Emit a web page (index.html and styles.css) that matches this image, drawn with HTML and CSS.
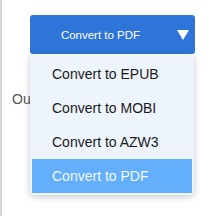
FILE: index.html
```html
<!DOCTYPE html>
<html>
<head>
<meta charset="utf-8">
<title>Convert</title>
<link rel="stylesheet" href="styles.css">
</head>
<body>
<div class="panel">
    <div class="convert">
        <button class="convert-btn">
            <span class="label">Convert to PDF</span>
            <span class="caret"></span>
        </button>
        <ul class="menu">
            <li>Convert to EPUB</li>
            <li>Convert to MOBI</li>
            <li>Convert to AZW3</li>
            <li class="active">Convert to PDF</li>
        </ul>
    </div>
    <p class="output">Output folder</p>
</div>
</body>
</html>
```

FILE: styles.css
```css
body, html {
    margin: 0;
    padding: 0;
    height: 100%;
    overflow: hidden;
    background: white;
}
.panel {
    height: 100%;
    border-left: 2px solid #d6d6d6;
    box-sizing: border-box;
    font-family: "Liberation Sans", Arial, sans-serif;
    padding-top: 15px;
}
.convert {
    position: relative;
    margin-left: 28px;
    width: 165px;
}
.convert-btn {
    display: flex;
    align-items: center;
    width: 165px;
    height: 39px;
    padding: 0 6px 0 0;
    border: none;
    border-radius: 3px;
    background-color: #2f74d8;
    color: white;
    font-family: inherit;
    font-size: 11.5px;
    cursor: pointer;
}
.convert-btn .label {
    flex: 1;
    text-align: center;
    padding-right: 6px;
}
.caret {
    width: 0;
    height: 0;
    border-left: 6px solid transparent;
    border-right: 6px solid transparent;
    border-top: 10px solid white;
}
.menu {
    position: absolute;
    top: 39px;
    left: 0;
    width: 160px;
    margin: 0;
    padding: 3px 2px 2px;
    list-style: none;
    background-color: #eef4fb;
    border-radius: 0 0 4px 4px;
    box-shadow: 0 2px 7px rgba(0, 0, 0, 0.22);
}
.menu li {
    height: 34px;
    line-height: 34px;
    padding-left: 20px;
    font-size: 14px;
    color: #1a1a1a;
}
.menu li.active {
    background-color: #63affc;
    color: #f4f9ff;
}
.output {
    margin: 37px 0 0 10px;
    font-size: 14px;
    color: #555;
}
```
